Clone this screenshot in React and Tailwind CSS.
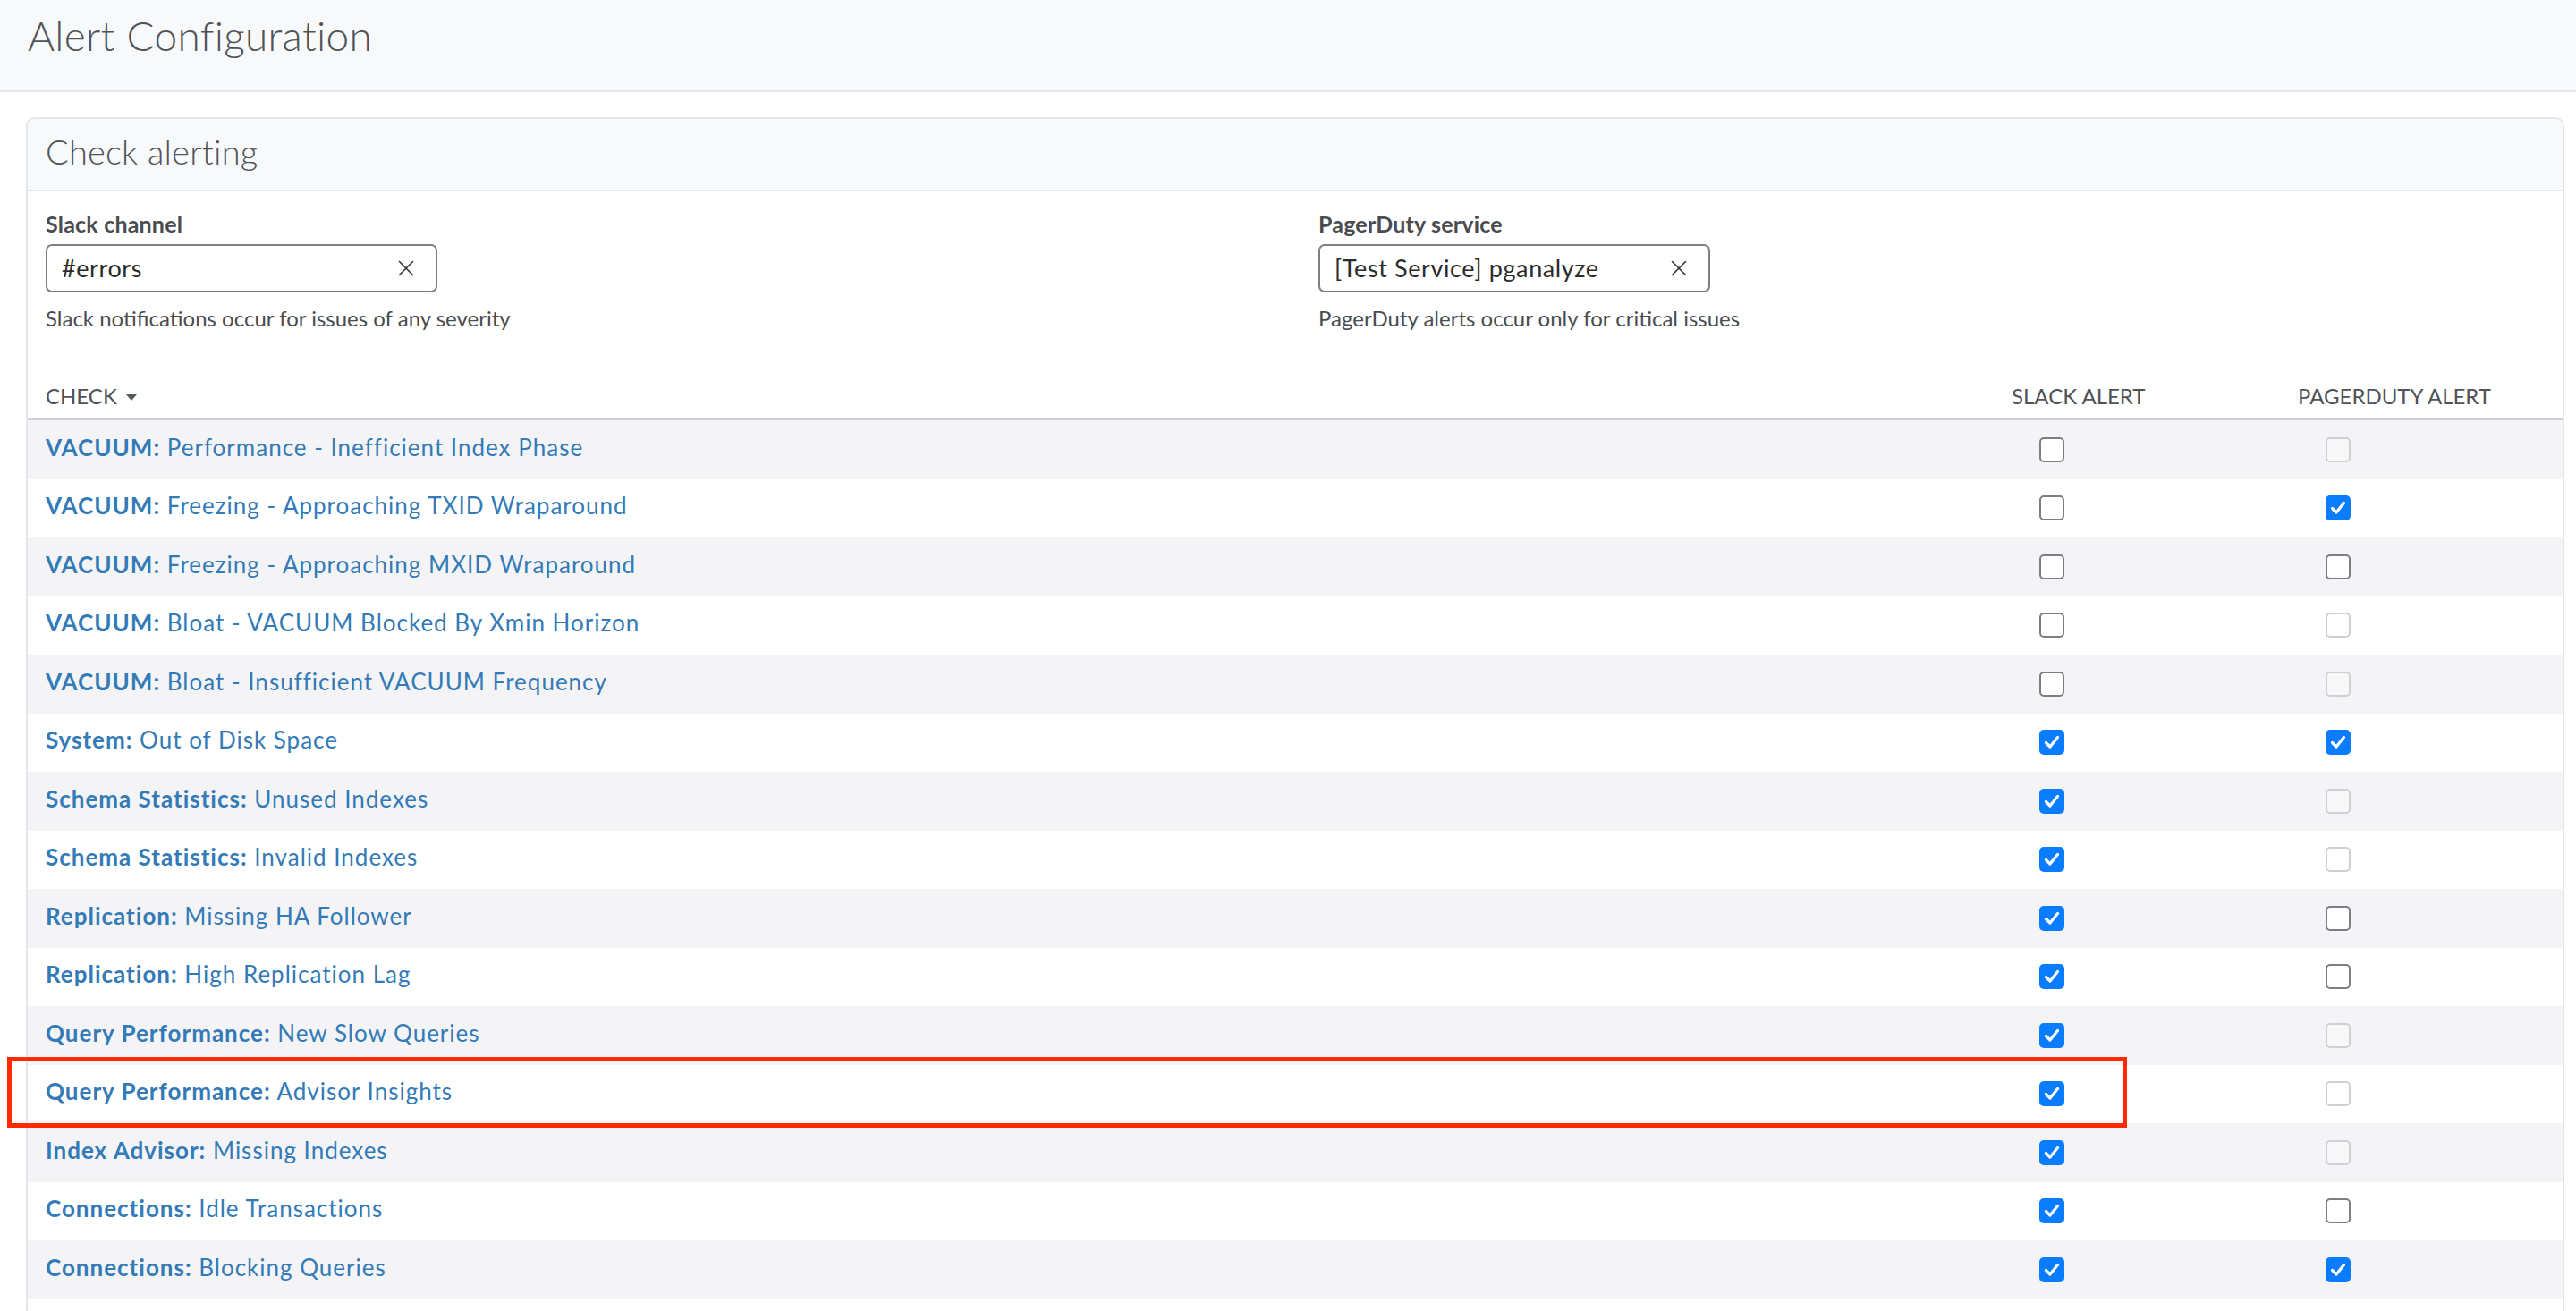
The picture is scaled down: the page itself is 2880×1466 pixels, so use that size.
import React from 'react';
import { X } from 'lucide-react';

const checks = [
  { group: 'VACUUM', name: 'Performance - Inefficient Index Phase', slack: 'off', pd: 'disabled' },
  { group: 'VACUUM', name: 'Freezing - Approaching TXID Wraparound', slack: 'off', pd: 'on' },
  { group: 'VACUUM', name: 'Freezing - Approaching MXID Wraparound', slack: 'off', pd: 'off' },
  { group: 'VACUUM', name: 'Bloat - VACUUM Blocked By Xmin Horizon', slack: 'off', pd: 'disabled' },
  { group: 'VACUUM', name: 'Bloat - Insufficient VACUUM Frequency', slack: 'off', pd: 'disabled' },
  { group: 'System', name: 'Out of Disk Space', slack: 'on', pd: 'on' },
  { group: 'Schema Statistics', name: 'Unused Indexes', slack: 'on', pd: 'disabled' },
  { group: 'Schema Statistics', name: 'Invalid Indexes', slack: 'on', pd: 'disabled' },
  { group: 'Replication', name: 'Missing HA Follower', slack: 'on', pd: 'off' },
  { group: 'Replication', name: 'High Replication Lag', slack: 'on', pd: 'off' },
  { group: 'Query Performance', name: 'New Slow Queries', slack: 'on', pd: 'disabled' },
  { group: 'Query Performance', name: 'Advisor Insights', slack: 'on', pd: 'disabled' },
  { group: 'Index Advisor', name: 'Missing Indexes', slack: 'on', pd: 'disabled' },
  { group: 'Connections', name: 'Idle Transactions', slack: 'on', pd: 'off' },
  { group: 'Connections', name: 'Blocking Queries', slack: 'on', pd: 'on' },
];

function Checkbox({ state }) {
  if (state === 'on') {
    return (
      <div className="w-[28px] h-[28px] rounded-[5px] bg-[#0a7cff] flex items-center justify-center">
        <svg width="28" height="28" viewBox="0 0 28 28" fill="none">
          <polyline points="7.5,14.5 12,19 20.5,8.5" stroke="white" strokeWidth="3.2" strokeLinecap="round" strokeLinejoin="round" />
        </svg>
      </div>
    );
  }
  if (state === 'disabled') {
    return <div className="w-[28px] h-[28px] rounded-[5px] border-2 border-[#cdd1d6] bg-white/40"></div>;
  }
  return <div className="w-[28px] h-[28px] rounded-[5px] border-2 border-[#7c7e84] bg-white"></div>;
}

function SelectBox({ value }) {
  return (
    <div className="w-[438px] h-[54px] rounded-[7px] border-2 border-[#7d7f84] bg-white flex items-center justify-between pl-[16px] pr-[18px]">
      <span className="text-[27px] tracking-[0.6px] text-[#2b2b2b]">{value}</span>
      <X size={30} strokeWidth={1.3} className="text-[#333]" />
    </div>
  );
}

export default function App() {
  return (
    <div className="relative bg-white min-h-[1466px] overflow-hidden" style={{ fontFamily: 'Lato, "Open Sans", sans-serif' }}>
      {/* Page header */}
      <div className="h-[103px] bg-[#f8f9fb] border-b-2 border-[#e3e6ea] px-[31px] pt-[12px]">
        <h1 className="text-[46px] leading-[56px] tracking-[0.3px] font-light text-[#4f5256]">Alert Configuration</h1>
      </div>

      {/* Card */}
      <div className="mt-[28px] ml-[29px] mr-[13px] border-2 border-[#e3e6ea] rounded-t-[10px] pb-[40px]">
        <div className="h-[81px] bg-[#f8f9fb] border-b-2 border-[#e3e6ea] rounded-t-[10px] px-[20px] pt-[12px]">
          <h2 className="text-[38px] leading-[48px] tracking-[0.2px] font-light text-[#4f5256]">Check alerting</h2>
        </div>

        <div className="grid grid-cols-[1423px_1fr] pl-[20px] pt-[24px]">
          <div>
            <div className="text-[25px] leading-[24px] tracking-[0.2px] font-bold text-[#4a4c50]">Slack channel</div>
            <div className="mt-[11px]">
              <SelectBox value="#errors" />
            </div>
            <div className="mt-[17px] text-[24px] leading-[24px] text-[#4a4c50]">Slack notifications occur for issues of any severity</div>
          </div>
          <div>
            <div className="text-[25px] leading-[24px] tracking-[0.2px] font-bold text-[#4a4c50]">PagerDuty service</div>
            <div className="mt-[11px]">
              <SelectBox value="[Test Service] pganalyze" />
            </div>
            <div className="mt-[17px] text-[24px] leading-[24px] text-[#4a4c50]">PagerDuty alerts occur only for critical issues</div>
          </div>
        </div>

        {/* Table header */}
        <div className="mt-[63px] grid grid-cols-[1fr_320px_296px] pl-[20px] pb-[12px] border-b-[3px] border-[#cdd1d6] text-[24px] leading-[24px] text-[#4f5256] uppercase">
          <div className="flex items-center gap-[10px]">
            <span>Check</span>
            <svg width="12" height="8" viewBox="0 0 12 8" className="mt-[4px]">
              <polygon points="0,0 12,0 6,7" fill="#55585c" />
            </svg>
          </div>
          <div>Slack Alert</div>
          <div>PagerDuty Alert</div>
        </div>

        {/* Rows */}
        {checks.map((c, i) => (
          <div
            key={i}
            className={`h-[65.5px] grid grid-cols-[1fr_320px_296px] items-center pl-[20px] ${i % 2 === 0 ? 'bg-[#f4f4f6]' : 'bg-white'}`}
          >
            <div className="text-[26px] leading-[26px] tracking-[1px] text-[#337ab7] pb-[6px]">
              <span className="font-bold">{c.group}:</span> {c.name}
            </div>
            <div className="pl-[31px]">
              <Checkbox state={c.slack} />
            </div>
            <div className="pl-[31px]">
              <Checkbox state={c.pd} />
            </div>
          </div>
        ))}
      </div>

      {/* Highlight annotation */}
      <div className="absolute left-[8px] top-[1182px] w-[2370px] h-[79px] border-[5px] border-[#ff2a00] pointer-events-none"></div>
    </div>
  );
}
